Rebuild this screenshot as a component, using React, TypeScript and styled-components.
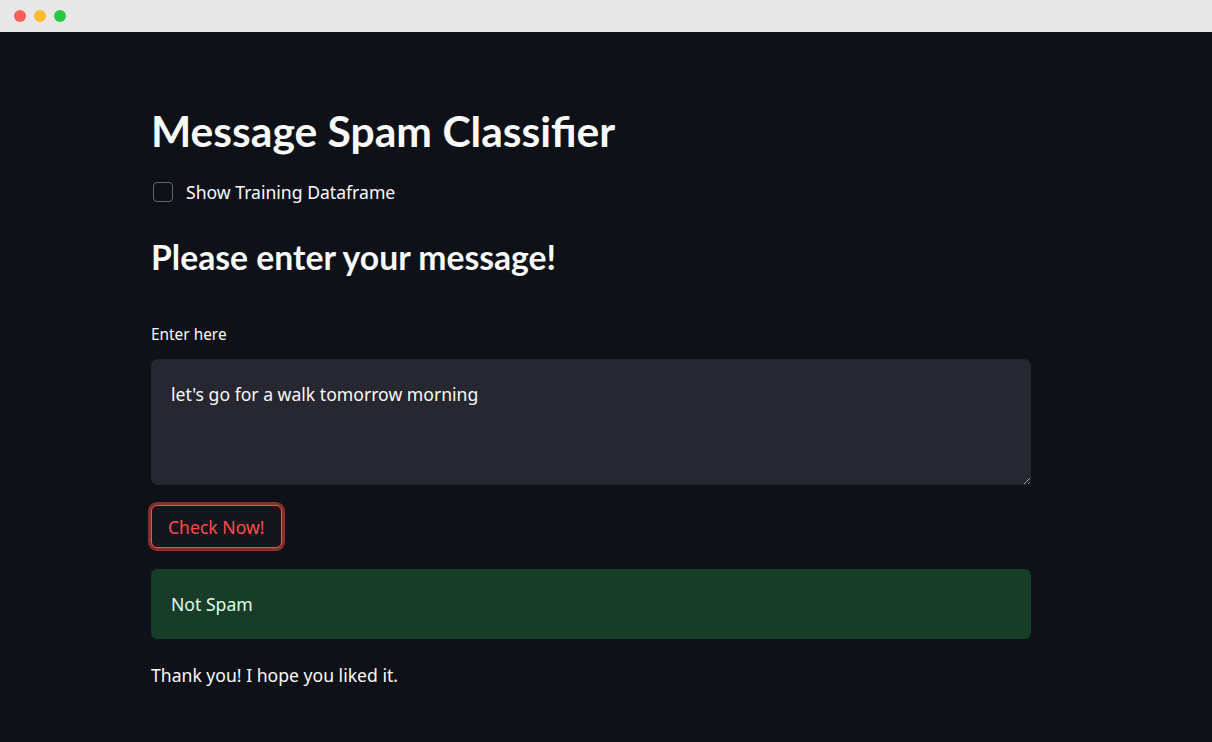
import React from "react";
import styled, { createGlobalStyle } from "styled-components";

const Global = createGlobalStyle`
  html, body { margin: 0; padding: 0; background: #0e1117; }
  body { font-family: "Noto Sans", Lato, sans-serif; color: #fafafa; }
  * { box-sizing: border-box; }
`;

const Window = styled.div`
  width: 1212px;
  height: 742px;
  display: flex;
  flex-direction: column;
  background: #0e1117;
  overflow: hidden;
`;

const TitleBar = styled.div`
  height: 32px;
  background: #e8e8e8;
  display: flex;
  align-items: center;
  gap: 8px;
  padding-left: 14px;
`;

const Dot = styled.span<{ $c: string }>`
  width: 12px;
  height: 12px;
  border-radius: 50%;
  background: ${(p) => p.$c};
`;

const Main = styled.main`
  display: flex;
  flex-direction: column;
  padding: 73px 0 0 151px;
  width: 1031px;
`;

const H1 = styled.h1`
  margin: 0;
  font-family: Lato, "Noto Sans", sans-serif;
  font-size: 42.6px;
  line-height: 52.8px;
  font-weight: 700;
  color: #fafafa;
`;

const CheckRow = styled.label`
  margin-top: 22px;
  display: flex;
  align-items: center;
  height: 24px;
  font-size: 17.6px;
`;

const CheckBox = styled.span`
  width: 20px;
  height: 20px;
  margin-left: 2px;
  margin-right: 13px;
  border: 1px solid #62656d;
  border-radius: 4px;
  background: transparent;
`;

const H2 = styled.h2`
  margin: 32px 0 0;
  font-family: Lato, "Noto Sans", sans-serif;
  font-size: 33.7px;
  line-height: 43.2px;
  font-weight: 700;
`;

const FieldLabel = styled.div`
  margin-top: 46px;
  font-size: 15.4px;
  line-height: 20px;
`;

const TextArea = styled.textarea`
  margin-top: 14px;
  width: 880px;
  height: 126px;
  background: #262730;
  border: none;
  border-radius: 7px;
  padding: 23px 20px;
  color: #fafafa;
  font-family: inherit;
  font-size: 17.6px;
  line-height: 24px;
  outline: none;
  resize: vertical;
  color-scheme: dark;
`;

const ButtonWrap = styled.div`
  margin-top: 20px;
  display: flex;
`;

const Button = styled.button`
  height: 43px;
  padding: 0 16px;
  background: #13161d;
  border: 1px solid #ff4b4b;
  border-radius: 6px;
  color: #ff4b4b;
  font-family: inherit;
  font-size: 17.6px;
  box-shadow: 0 0 0 3px rgba(255, 75, 75, 0.5);
`;

const Alert = styled.div`
  margin-top: 21px;
  width: 880px;
  height: 70px;
  display: flex;
  align-items: center;
  padding: 0 20px;
  background: #173d29;
  border-radius: 6px;
  color: #dffde9;
  font-size: 17.6px;
`;

const Para = styled.p`
  margin: 24px 0 0;
  font-size: 17.6px;
  line-height: 24px;
`;

export default function App() {
  return (
    <Window>
      <Global />
      <TitleBar>
        <Dot $c="#ff5f57" />
        <Dot $c="#febc2e" />
        <Dot $c="#28c840" />
      </TitleBar>
      <Main>
        <H1>Message Spam Classifier</H1>
        <CheckRow>
          <CheckBox />
          Show Training Dataframe
        </CheckRow>
        <H2>Please enter your message!</H2>
        <FieldLabel>Enter here</FieldLabel>
        <TextArea readOnly defaultValue="let's go for a walk tomorrow morning" />
        <ButtonWrap>
          <Button>Check Now!</Button>
        </ButtonWrap>
        <Alert>Not Spam</Alert>
        <Para>Thank you! I hope you liked it.</Para>
      </Main>
    </Window>
  );
}
